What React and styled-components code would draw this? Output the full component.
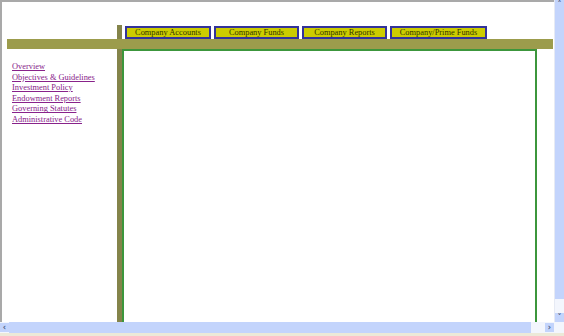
import React from 'react';
import styled, { createGlobalStyle } from 'styled-components';

const tabs = ['Company Accounts', 'Company Funds', 'Company Reports', 'Company/Prime Funds'];
const tabWidths = [86, 85, 85, 97];
const links = [
  'Overview',
  'Objectives & Guidelines',
  'Investment Policy',
  'Endowment Reports',
  'Governing Statutes',
  'Administrative Code',
];

const App = () => {
  return (
    <>
      <GlobalStyle />
      <Window>
        <Viewport>
          <Page>
            <Spacer />
            <Divider />
            <TabRow>
              {tabs.map((t, i) => (
                <Tab key={t} $w={tabWidths[i]}>{t}</Tab>
              ))}
            </TabRow>
            <Bar />
            <Nav>
              {links.map(l => (
                <NavLink key={l} href="#">{l}</NavLink>
              ))}
            </Nav>
            <Divider />
            <Content />
          </Page>
        </Viewport>
        <VScroll>
          <Arrow>&#708;</Arrow>
          <VThumb />
          <Arrow>&#709;</Arrow>
        </VScroll>
        <HScroll>
          <Arrow>&#8249;</Arrow>
          <HThumb />
          <Arrow>&#8250;</Arrow>
        </HScroll>
        <Corner />
        <Status />
      </Window>
    </>
  );
};

const GlobalStyle = createGlobalStyle`
  body {
    margin: 0;
    overflow: hidden;
    background: #ffffff;
  }
`;

const Window = styled.div`
  width: 564px;
  height: 336px;
  display: grid;
  grid-template-columns: 1fr 10px;
  grid-template-rows: 1fr 11px 3px;
`;

const Viewport = styled.div`
  border-top: 2px solid #a9a9a9;
  border-left: 2px solid #a9a9a9;
  background: #ffffff;
  overflow: hidden;
  padding: 23px 0 0 5px;
`;

const Page = styled.div`
  width: 546px;
  height: 297px;
  display: grid;
  grid-template-columns: 110px 5px 1fr;
  grid-template-rows: 14px 10px 1fr;
`;

const Spacer = styled.div``;

const Divider = styled.div`
  background: #84844a;
`;

const TabRow = styled.div`
  display: flex;
  gap: 3px;
  padding: 1px 0 0 3px;
`;

const Tab = styled.div`
  width: ${p => p.$w}px;
  height: 13px;
  box-sizing: border-box;
  border: 2px solid #33339a;
  background: #cccc00;
  font-family: "Liberation Serif", "Times New Roman", serif;
  font-size: 8.4px;
  line-height: 9px;
  color: #333300;
  text-align: center;
  white-space: nowrap;
`;

const Bar = styled.div`
  grid-column: 1 / 4;
  background: #9c9c4c;
`;

const Nav = styled.div`
  display: flex;
  flex-direction: column;
  padding: 13px 0 0 5px;
`;

const NavLink = styled.a`
  font-family: "Liberation Serif", "Times New Roman", serif;
  font-size: 8.4px;
  line-height: 10.6px;
  color: #88228a;
  text-decoration: underline;
  white-space: nowrap;
`;

const Content = styled.div`
  width: 415px;
  box-sizing: border-box;
  border: 2px solid #3c963c;
  border-bottom: none;
`;

const VScroll = styled.div`
  display: flex;
  flex-direction: column;
  align-items: center;
  background: #f3f6fd;
  border-left: 1px solid #e6eaf4;
`;

const VThumb = styled.div`
  flex: 1;
  width: 100%;
  background: #c3d4fc;
  margin-bottom: 14px;
`;

const HScroll = styled.div`
  display: flex;
  align-items: center;
  background: #f3f6fd;
`;

const HThumb = styled.div`
  flex: 1;
  height: 100%;
  background: #c3d4fc;
  margin-right: 14px;
`;

const Arrow = styled.div`
  width: 9px;
  height: 9px;
  display: flex;
  align-items: center;
  justify-content: center;
  font-family: "DejaVu Sans", sans-serif;
  font-size: 8px;
  font-weight: bold;
  color: #4d6185;
  background: #c3d4fc;
`;

const Corner = styled.div`
  background: #f3f6fd;
`;

const Status = styled.div`
  grid-column: 1 / 3;
  background: #ece9d8;
`;

export default App;
